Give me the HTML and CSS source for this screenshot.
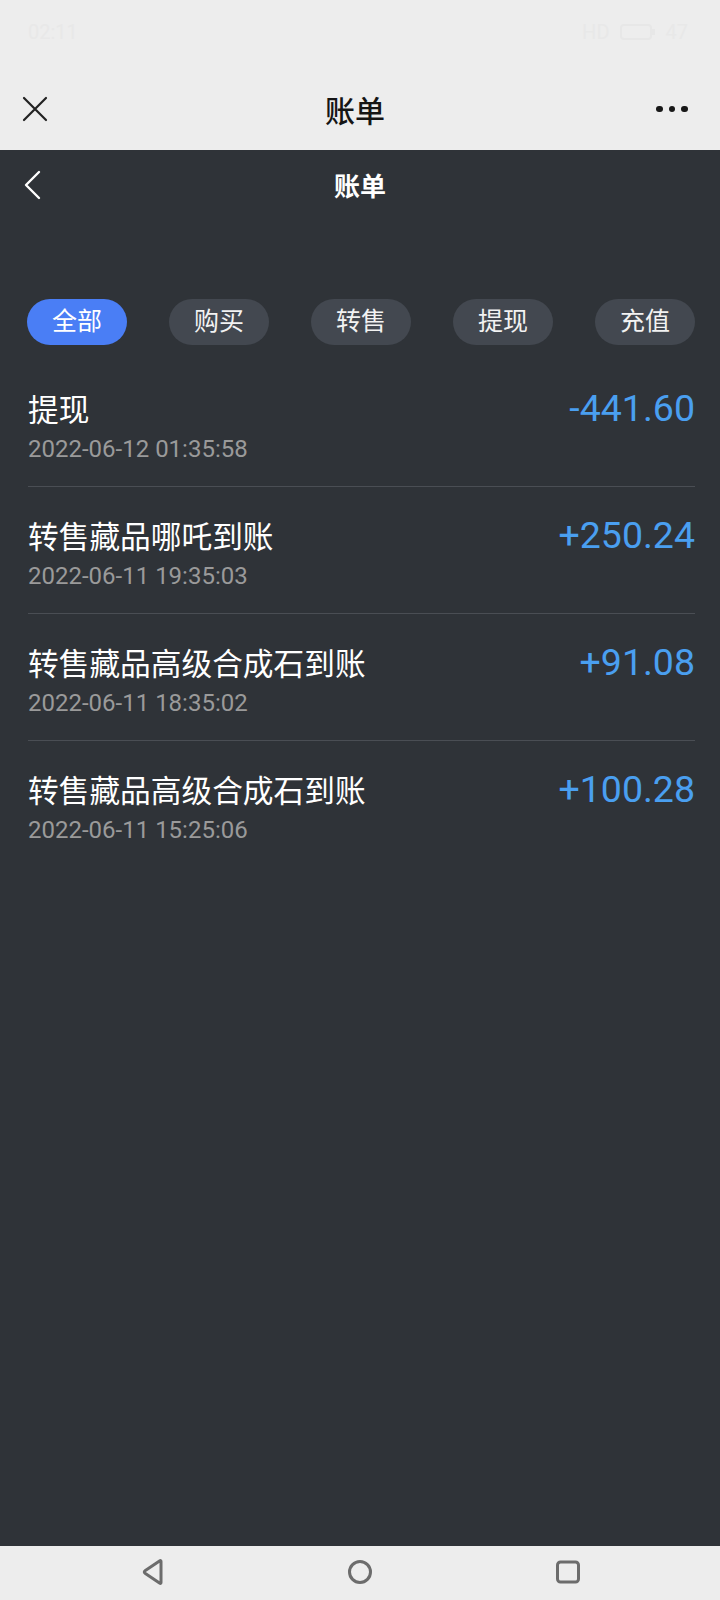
FILE: index.html
```html
<!DOCTYPE html>
<html lang="zh-CN">
<head>
<meta charset="utf-8">
<title>账单</title>
<link rel="stylesheet" href="styles.css">
</head>
<body>
<div class="phone">
  <div class="top">
    <div class="status">
      <span class="time">02:11</span>
      <span class="sys">
        <span class="sys-text">HD</span>
        <svg class="batt" width="36" height="16" viewBox="0 0 36 16"><rect x="1" y="1" width="30" height="14" rx="3" fill="none" stroke="#e7e7e7" stroke-width="2"/><rect x="32" y="5" width="3" height="6" fill="#e7e7e7"/></svg>
        <span class="sys-text">47</span>
      </span>
    </div>
    <div class="wxbar">
      <div class="side left">
        <svg class="close" width="26" height="26" viewBox="0 0 26 26"><path d="M2 2 L24 24 M24 2 L2 24" stroke="#222" stroke-width="2.2" stroke-linecap="round"/></svg>
      </div>
      <div class="wxtitle">账单</div>
      <div class="side right">
        <div class="more"><i></i><i></i><i></i></div>
      </div>
    </div>
  </div>
  <div class="main">
    <div class="header">
      <svg class="back" width="20" height="30" viewBox="0 0 20 30"><path d="M16 2 L3 15 L16 28" fill="none" stroke="#fff" stroke-width="2.4" stroke-linecap="round" stroke-linejoin="round"/></svg>
      <div class="htitle">账单</div>
    </div>
    <div class="tabs">
      <span class="tab active">全部</span>
      <span class="tab">购买</span>
      <span class="tab">转售</span>
      <span class="tab">提现</span>
      <span class="tab">充值</span>
    </div>
    <ul class="list">
      <li class="row">
        <div class="line"><span class="name">提现</span><span class="amt">-441.60</span></div>
        <div class="date">2022-06-12 01:35:58</div>
      </li>
      <li class="row">
        <div class="line"><span class="name">转售藏品哪吒到账</span><span class="amt">+250.24</span></div>
        <div class="date">2022-06-11 19:35:03</div>
      </li>
      <li class="row">
        <div class="line"><span class="name">转售藏品高级合成石到账</span><span class="amt">+91.08</span></div>
        <div class="date">2022-06-11 18:35:02</div>
      </li>
      <li class="row last">
        <div class="line"><span class="name">转售藏品高级合成石到账</span><span class="amt">+100.28</span></div>
        <div class="date">2022-06-11 15:25:06</div>
      </li>
    </ul>
  </div>
  <div class="navbar">
    <svg width="24" height="26" viewBox="0 0 24 26"><path d="M20 2.5 L20 23.5 Q20 25 18.5 24 L4 14.2 Q2.6 13 4 11.8 L18.5 2 Q20 1 20 2.5 Z" fill="none" stroke="#6c6c6c" stroke-width="3" stroke-linejoin="round"/></svg>
    <svg width="26" height="26" viewBox="0 0 26 26"><circle cx="13" cy="13" r="10.5" fill="none" stroke="#6c6c6c" stroke-width="3"/></svg>
    <svg width="26" height="26" viewBox="0 0 26 26"><rect x="2.5" y="3" width="21" height="20" rx="3" fill="none" stroke="#6c6c6c" stroke-width="3"/></svg>
  </div>
</div>
</body>
</html>
```

FILE: styles.css
```css
* { box-sizing: border-box; }
html, body { margin: 0; padding: 0; }
body {
  width: 720px;
  height: 1600px;
  font-family: "Noto Sans CJK SC", "Noto Sans", sans-serif;
  background: #2f3338;
}
.phone {
  width: 720px;
  height: 1600px;
  display: flex;
  flex-direction: column;
}
.top { background: #ededed; }
.status {
  height: 68px;
  display: flex;
  justify-content: space-between;
  align-items: flex-start;
  padding: 20px 32px 0 28px;
  color: #e8e8e8;
  font-family: Roboto, sans-serif;
  font-size: 20px;
}
.sys { display: flex; align-items: center; gap: 10px; }
.wxbar {
  height: 82px;
  display: grid;
  grid-template-columns: 1fr auto 1fr;
  align-items: center;
  padding: 0 32px 0 22px;
}
.side { display: flex; align-items: center; }
.side.right { justify-content: flex-end; }
.close { display: block; }
.wxtitle {
  font-size: 30px;
  font-weight: 500;
  color: #151515;
  line-height: 1;
}
.more { display: flex; gap: 6px; width: 32px; }
.more i {
  width: 6.5px;
  height: 6.5px;
  border-radius: 50%;
  background: #181818;
  display: block;
}
.main {
  flex: 1;
  background: #2f3338;
  color: #fff;
}
.header {
  height: 70px;
  display: flex;
  align-items: center;
  padding-left: 23px;
}
.back { display: block; }
.htitle {
  flex: 1;
  text-align: center;
  font-size: 26px;
  font-weight: 700;
  margin-right: 43px;
  line-height: 1;
}
.tabs {
  margin-top: 79px;
  padding: 0 25px 0 27px;
  display: flex;
  justify-content: space-between;
}
.tab {
  width: 100px;
  height: 46px;
  border-radius: 23px;
  background: #434850;
  color: #f2f2f2;
  font-size: 25px;
  display: flex;
  align-items: center;
  justify-content: center;
  line-height: 1;
  padding-bottom: 5px;
}
.tab.active { background: #4a7ef5; color: #fff; }
.list {
  list-style: none;
  margin: 15px 0 0;
  padding: 0 25px 0 28px;
}
.row {
  padding: 28px 0 22px;
  border-bottom: 1px solid #4a4e54;
}
.row.last { border-bottom: none; }
.line {
  display: flex;
  justify-content: space-between;
  align-items: center;
  height: 40px;
}
.name {
  font-size: 30.7px;
  color: #fff;
  line-height: 40px;
}
.amt {
  font-family: Roboto, sans-serif;
  font-size: 37.5px;
  color: #4a9ff0;
  line-height: 40px;
}
.date {
  margin-top: 6px;
  font-family: Roboto, sans-serif;
  font-size: 24px;
  color: #9a9a9a;
  line-height: 30px;
}
.navbar {
  height: 54px;
  background: #ededed;
  display: flex;
  align-items: center;
  padding: 0 0 2px 141px;
  gap: 182px;
}
.navbar svg { display: block; }
```
